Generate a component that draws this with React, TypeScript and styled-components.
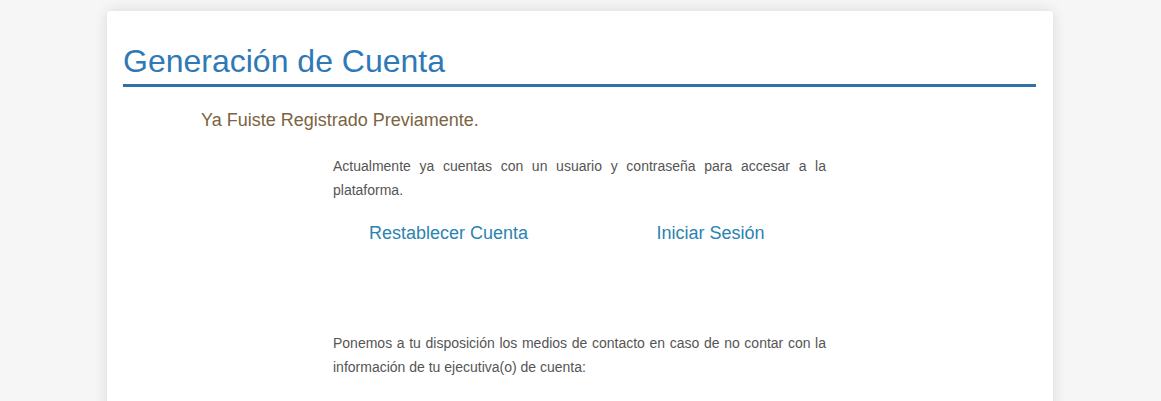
import styled, { createGlobalStyle } from 'styled-components';

const GlobalStyle = createGlobalStyle`
  html, body {
    margin: 0;
    padding: 0;
    background: #f6f6f6;
    font-family: "Liberation Sans", Arial, sans-serif;
  }
`;

const Page = styled.div`
  padding: 11px 1px 0 0;
  height: 401px;
  box-sizing: border-box;
  overflow: hidden;
`;

const Card = styled.section`
  width: 946px;
  margin: 0 auto;
  min-height: 420px;
  background: #ffffff;
  border-radius: 4px;
  box-shadow: 0 0 14px rgba(0, 0, 0, 0.12);
  padding: 32px 17px 40px 16px;
  box-sizing: border-box;
`;

const Title = styled.h1`
  margin: 0;
  padding-bottom: 4px;
  border-bottom: 3px solid #2f70a9;
  color: #2e79b6;
  font-size: 32px;
  font-weight: 400;
  line-height: normal;
`;

const Subtitle = styled.h2`
  margin: 23px 0 0;
  padding-left: 78px;
  color: #7a6441;
  font-size: 18px;
  font-weight: 400;
  line-height: normal;
`;

const Text = styled.p<{ $top: number }>`
  width: 493px;
  margin: ${(p) => p.$top}px auto 0;
  color: #555555;
  font-size: 14px;
  line-height: 24px;
  text-align: justify;
`;

const Links = styled.div`
  display: grid;
  grid-template-columns: 262px 262px;
  justify-content: center;
  margin-top: 21px;
`;

const Link = styled.a`
  text-align: center;
  color: #2a83b2;
  font-size: 18px;
  line-height: normal;
  text-decoration: none;
  cursor: pointer;
`;

const App = () => {
  return (
    <>
      <GlobalStyle />
      <Page>
        <Card>
          <Title>Generación de Cuenta</Title>
          <Subtitle>Ya Fuiste Registrado Previamente.</Subtitle>
          <Text $top={23}>
            Actualmente ya cuentas con un usuario y contraseña para accesar a la
            plataforma.
          </Text>
          <Links>
            <Link>Restablecer Cuenta</Link>
            <Link>Iniciar Sesión</Link>
          </Links>
          <Text $top={87}>
            Ponemos a tu disposición los medios de contacto en caso de no contar
            con la información de tu ejecutiva(o) de cuenta:
          </Text>
        </Card>
      </Page>
    </>
  );
};

export default App;
